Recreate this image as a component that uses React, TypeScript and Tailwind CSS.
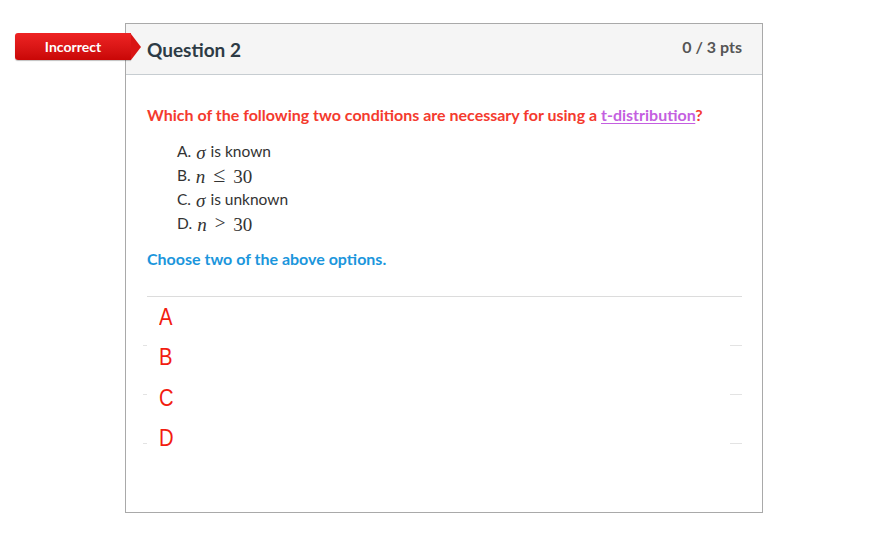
import React from 'react';

const Sym: React.FC<{ children: React.ReactNode; italic?: boolean; big?: boolean }> = ({ children, italic, big }) => (
  <span className={`font-['Liberation_Serif',serif] leading-none ${big ? 'text-[22px]' : 'text-[19px]'} ${italic ? 'italic' : ''}`}>{children}</span>
);

const options: { key: string; body: React.ReactNode }[] = [
  { key: 'A', body: <><Sym italic>σ</Sym><span>is known</span></> },
  { key: 'B', body: <><Sym italic>n</Sym><span className="mx-[3px]"><Sym big>≤</Sym></span><Sym>30</Sym></> },
  { key: 'C', body: <><Sym italic>σ</Sym><span>is unknown</span></> },
  { key: 'D', body: <><Sym italic>n</Sym><span className="mx-[3px]"><Sym>&gt;</Sym></span><Sym>30</Sym></> },
];

export default function App() {
  return (
    <div className="min-h-[552px] w-[875px] bg-white pt-[23px] pl-[125px] font-['Lato','Liberation_Sans',sans-serif]">
      <div className="relative w-[638px] h-[490px] border border-[#a9a9a9] bg-white">
        {/* status badge */}
        <div className="absolute left-[-111px] top-[9px] flex items-center">
          <div className="w-[116px] h-[27px] rounded-l-[3px] bg-gradient-to-b from-[#ee2323] to-[#c90606] flex items-center justify-center text-white text-[14px] font-bold shadow-[0_1px_1px_rgba(0,0,0,0.25)]">
            Incorrect
          </div>
          <div className="w-0 h-0 border-y-[13.5px] border-y-transparent border-l-[10px] border-l-[#d91414]" />
        </div>

        <div className="h-[51px] bg-[#f5f5f5] border-b border-[#c7cdd1] flex items-start justify-between pl-[21px] pr-[20px]">
          <div className="mt-[12px] text-[19px] font-bold text-[#2d3b45]">Question 2</div>
          <div className="mt-[11px] text-[16px] font-bold text-[#555]">0 / 3 pts</div>
        </div>

        <div className="pl-[21px] pr-[20px] pt-[30px]">
          <p className="text-[16px] font-bold text-[#f43a2e] leading-[20px]">
            Which of the following two conditions are necessary for using a{' '}
            <span className="text-[#c45fe0] underline underline-offset-2">t-distribution</span>?
          </p>

          <div className="mt-[15px] pl-[30px] text-[15.5px] text-[#333]">
            {options.map(o => (
              <div key={o.key} className="h-[24px] flex items-center gap-[5px]">
                <span>{o.key}.</span>
                <span className="flex items-center gap-[5px]">{o.body}</span>
              </div>
            ))}
          </div>

          <p className="mt-[11px] text-[16px] font-bold text-[#1b96dc]">Choose two of the above options.</p>

          <div className="relative mt-[25px] border-t border-[#dcdcdc]">
            {/* faint separators of the answer table */}
            {['top-[48px]', 'top-[97px]', 'top-[146px]'].map(t => (
              <React.Fragment key={t}>
                <div className={`absolute ${t} left-[-4px] w-[4px] h-px bg-[#e3e3e3]`} />
                <div className={`absolute ${t} right-0 w-[12px] h-px bg-[#e3e3e3]`} />
              </React.Fragment>
            ))}
            <div className="flex flex-col font-['Liberation_Sans',sans-serif] text-[23px] text-[#f21c10]">
              {['A', 'B', 'C', 'D'].map(l => (
                <div key={l} className="h-[40.5px] pl-[12px] flex items-center leading-none">
                  <span className="inline-block scale-x-[0.88] origin-left">{l}</span>
                </div>
              ))}
            </div>
          </div>
        </div>
      </div>
    </div>
  );
}
